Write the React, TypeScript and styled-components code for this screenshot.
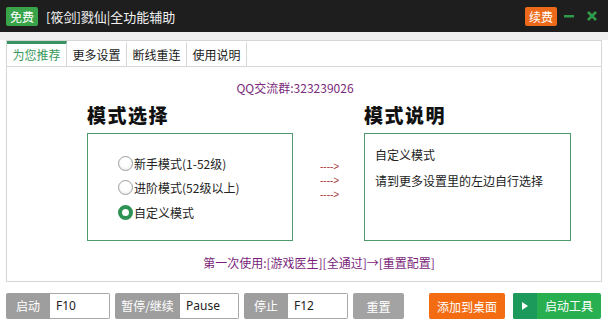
import styled, { createGlobalStyle } from 'styled-components';

const GlobalStyle = createGlobalStyle`
  html, body {
    margin: 0;
    padding: 0;
  }
  body {
    width: 608px;
    height: 328px;
    overflow: hidden;
    background: #ffffff;
    font-family: "Noto Sans CJK SC", "Noto Sans", sans-serif;
    color: #222;
  }
`;

const Window = styled.div`
  width: 608px;
  height: 328px;
  display: flex;
  flex-direction: column;
  background: #fff;
`;

const TitleBar = styled.header`
  height: 32px;
  flex: none;
  display: flex;
  align-items: center;
  padding: 0 11px 0 6px;
  background: #1e1e1e;
  box-sizing: border-box;
`;

const Badge = styled.span<{ $tone: 'green' | 'orange' }>`
  display: inline-block;
  height: 19px;
  padding: 0 4px;
  line-height: 19px;
  border-radius: 2px;
  font-size: 12px;
  color: #fff;
  background: ${({ $tone }) => ($tone === 'green' ? '#3aa44a' : '#ec6a1a')};
`;

const Title = styled.span`
  margin-left: 8px;
  font-size: 13px;
  color: #f2f2f2;
  flex: 1;
`;

const WinButton = styled.svg<{ $gap: number }>`
  display: block;
  margin-left: ${({ $gap }) => $gap}px;
`;

const PanelArea = styled.div`
  padding: 8px 6px 0;
  background: linear-gradient(#efefef 8px, #fff 8px);
`;

const Panel = styled.section`
  height: 242px;
  border: 1px solid #d6d6d6;
  box-sizing: border-box;
  background: #fff;
  display: flex;
  flex-direction: column;
`;

const TabBar = styled.nav`
  display: flex;
  height: 25px;
  border-bottom: 1px solid #d6d6d6;
  flex: none;
`;

const Tab = styled.div<{ $active?: boolean }>`
  width: 60px;
  box-sizing: border-box;
  border-right: 1px solid #d6d6d6;
  border-top: 3px solid ${({ $active }) => ($active ? '#3a9462' : 'transparent')};
  font-size: 12px;
  line-height: 21px;
  text-align: center;
  color: ${({ $active }) => ($active ? '#3a9a5c' : '#1a1a1a')};
`;

const Content = styled.div`
  flex: 1;
`;

const QQLine = styled.div`
  margin-top: 14px;
  padding-right: 18px;
  height: 14px;
  line-height: 14px;
  font-size: 12px;
  text-align: center;
  color: #7a2a7a;
`;

const ModeGrid = styled.div`
  margin: 6px 0 0 80px;
  display: grid;
  grid-template-columns: 206px 71px 207px;
  grid-template-rows: 28px 108px;
  row-gap: 4px;
`;

const Heading = styled.h2<{ $col: number }>`
  grid-column: ${({ $col }) => $col};
  margin: 0;
  font-size: 19px;
  line-height: 28px;
  font-weight: 900;
  letter-spacing: 1.5px;
  color: #111;
  font-family: "Noto Sans CJK SC", serif;
`;

const ModeBox = styled.div`
  border: 1px solid #4e9a6e;
  box-sizing: border-box;
`;

const RadioList = styled(ModeBox)`
  padding: 17px 0 0 30px;
`;

const RadioRow = styled.label`
  display: flex;
  align-items: center;
  height: 24.5px;
  font-size: 12px;
  color: #222;
`;

const RadioDot = styled.span<{ $checked?: boolean }>`
  width: 15px;
  height: 15px;
  border-radius: 50%;
  box-sizing: border-box;
  margin-right: 1px;
  flex: none;
  border: ${({ $checked }) => ($checked ? '4px solid #2f9255' : '1px solid #9aa29c')};
  background: ${({ $checked }) =>
    $checked ? '#fff' : 'radial-gradient(circle at 50% 40%, #ffffff 40%, #e6e6e6 100%)'};
`;

const Arrows = styled.div`
  padding: 27px 0 0 27px;
  font-family: "Liberation Sans", sans-serif;
  font-size: 10px;
  line-height: 14px;
  color: #a83a3a;
`;

const Explain = styled(ModeBox)`
  padding: 12px 0 0 10px;
  font-size: 12px;
  line-height: 18px;
`;

const ExplainLine = styled.div<{ $gap?: number }>`
  margin-top: ${({ $gap }) => $gap ?? 0}px;
`;

const FirstUse = styled.div`
  margin-top: 15px;
  padding-left: 30px;
  height: 14px;
  line-height: 14px;
  font-size: 12px;
  text-align: center;
  color: #7a1f7a;
`;

const Footer = styled.footer`
  display: flex;
  align-items: center;
  padding: 11px 6px 0;
`;

const KeyGroup = styled.div`
  display: flex;
  height: 26px;
  margin-right: 5px;
  border-radius: 2px;
  overflow: hidden;
`;

const KeyLabel = styled.span<{ $w: number }>`
  width: ${({ $w }) => $w}px;
  background: #9e9e9e;
  color: #fff;
  font-size: 12px;
  line-height: 26px;
  text-align: center;
`;

const KeyInput = styled.span<{ $w: number }>`
  width: ${({ $w }) => $w}px;
  box-sizing: border-box;
  border: 1px solid #a8a8a8;
  border-left: none;
  background: #fff;
  padding-left: 6px;
  font-family: "Noto Sans", sans-serif;
  font-size: 12px;
  line-height: 24px;
  color: #222;
`;

const ActionButton = styled.button<{ $w: number; $bg: string; $gapLeft?: number }>`
  width: ${({ $w }) => $w}px;
  height: 26px;
  margin-left: ${({ $gapLeft }) => $gapLeft ?? 0}px;
  padding: 0;
  border: none;
  border-radius: 2px;
  background: ${({ $bg }) => $bg};
  color: #fff;
  font-family: "Noto Sans CJK SC", sans-serif;
  font-size: 12px;
  display: flex;
  align-items: center;
  justify-content: center;
  overflow: hidden;
`;

const PlayPart = styled.span`
  width: 24px;
  height: 100%;
  background: #1c9a5c;
  display: flex;
  align-items: center;
  justify-content: center;
`;

const LaunchText = styled.span`
  flex: 1;
  height: 100%;
  line-height: 26px;
  text-align: center;
`;

const modes = [
  { text: '新手模式(1-52级)' },
  { text: '进阶模式(52级以上)' },
  { text: '自定义模式', checked: true },
];

const tabs = ['为您推荐', '更多设置', '断线重连', '使用说明'];

export default function App() {
  return (
    <Window>
      <GlobalStyle />
      <TitleBar>
        <Badge $tone="green">免费</Badge>
        <Title>[筱剑]戮仙|全功能辅助</Title>
        <Badge $tone="orange">续费</Badge>
        <WinButton $gap={7} width="10" height="10" viewBox="0 0 10 10">
          <rect x="0" y="4" width="10" height="2.5" fill="#2f9a4a" />
        </WinButton>
        <WinButton $gap={13} width="10" height="10" viewBox="0 0 10 10">
          <path d="M1 1 L9 9 M9 1 L1 9" stroke="#2f9a4a" strokeWidth="2.6" />
        </WinButton>
      </TitleBar>

      <PanelArea>
        <Panel>
          <TabBar>
            {tabs.map((t, i) => (
              <Tab key={t} $active={i === 0}>
                {t}
              </Tab>
            ))}
          </TabBar>
          <Content>
            <QQLine>QQ交流群:323239026</QQLine>
            <ModeGrid>
              <Heading $col={1}>模式选择</Heading>
              <Heading $col={3}>模式说明</Heading>
              <RadioList>
                {modes.map((m) => (
                  <RadioRow key={m.text}>
                    <RadioDot $checked={m.checked} />
                    {m.text}
                  </RadioRow>
                ))}
              </RadioList>
              <Arrows>
                <div>----&gt;</div>
                <div>----&gt;</div>
                <div>----&gt;</div>
              </Arrows>
              <Explain>
                <ExplainLine>自定义模式</ExplainLine>
                <ExplainLine $gap={8}>请到更多设置里的左边自行选择</ExplainLine>
              </Explain>
            </ModeGrid>
            <FirstUse>第一次使用:[游戏医生][全通过]→[重置配置]</FirstUse>
          </Content>
        </Panel>
      </PanelArea>

      <Footer>
        <KeyGroup>
          <KeyLabel $w={44}>启动</KeyLabel>
          <KeyInput $w={60}>F10</KeyInput>
        </KeyGroup>
        <KeyGroup>
          <KeyLabel $w={65}>暂停/继续</KeyLabel>
          <KeyInput $w={59}>Pause</KeyInput>
        </KeyGroup>
        <KeyGroup>
          <KeyLabel $w={44}>停止</KeyLabel>
          <KeyInput $w={60}>F12</KeyInput>
        </KeyGroup>
        <ActionButton $w={51} $bg="#a3a3a3">重置</ActionButton>
        <ActionButton $w={76} $bg="#f36c12" $gapLeft={25}>添加到桌面</ActionButton>
        <ActionButton $w={88} $bg="#28b050" $gapLeft={8}>
          <PlayPart>
            <svg width="6" height="8" viewBox="0 0 6 8">
              <path d="M0 0 L6 4 L0 8 Z" fill="#fff" />
            </svg>
          </PlayPart>
          <LaunchText>启动工具</LaunchText>
        </ActionButton>
      </Footer>
    </Window>
  );
}
